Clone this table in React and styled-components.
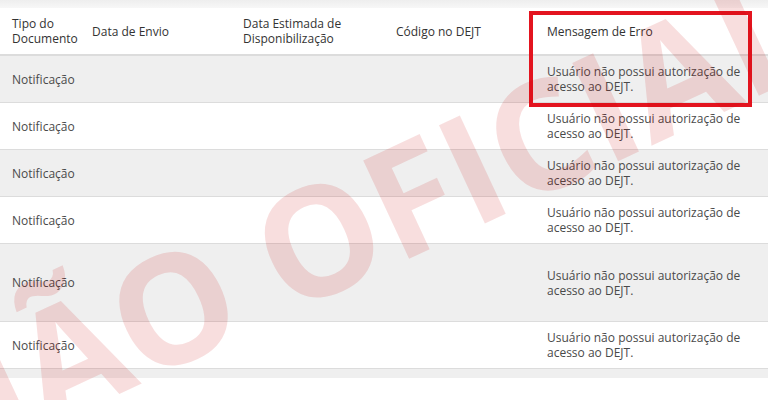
import React from "react";
import styled, { createGlobalStyle } from "styled-components";

const GlobalStyle = createGlobalStyle`
  html, body {
    margin: 0;
    padding: 0;
    background: #fff;
    font-family: "Open Sans", "Liberation Sans", sans-serif;
  }
`;

const Page = styled.div`
  position: relative;
  width: 768px;
  height: 400px;
  overflow: hidden;
  background: #fff;
`;

const TopStrip = styled.div`
  height: 8px;
  background: linear-gradient(#eeeeee, #f7f7f7);
`;

const Table = styled.table`
  width: 768px;
  border-collapse: collapse;
  table-layout: fixed;
  font-size: 12px;
  line-height: 15px;
`;

const HeadCell = styled.th`
  box-sizing: border-box;
  width: ${(p) => p.$w}px;
  padding: 8px 12px;
  text-align: left;
  font-weight: 400;
  color: #333;
  vertical-align: middle;
  border-bottom: 2px solid #dcdcdc;
`;

const Row = styled.tr`
  height: ${(p) => p.$h}px;
  background: ${(p) => (p.$striped ? "#efefef" : "#fff")};
  border-bottom: 1px solid #dcdcdc;
`;

const Cell = styled.td`
  box-sizing: border-box;
  padding: 8px 12px;
  color: #4a4a4a;
  vertical-align: middle;
`;

const BottomStrip = styled.div`
  height: 9px;
  background: #efefef;
`;

const Highlight = styled.div`
  position: absolute;
  left: 529px;
  top: 11px;
  width: 223px;
  height: 96px;
  box-sizing: border-box;
  border: 4px solid #e3141f;
  pointer-events: none;
`;

const Watermark = styled.div`
  position: fixed;
  inset: 0;
  display: flex;
  align-items: center;
  justify-content: center;
  pointer-events: none;
  overflow: hidden;
`;

const WatermarkText = styled.span`
  display: block;
  white-space: nowrap;
  font-family: "Open Sans", "Liberation Sans", sans-serif;
  font-weight: 700;
  font-size: 152px;
  color: rgba(204, 0, 0, 0.13);
  transform: translate(-29px, 19px) rotate(-25deg);
`;

const columns = [
  { label: "Tipo do Documento", w: 80 },
  { label: "Data de Envio", w: 151 },
  { label: "Data Estimada de Disponibilização", w: 153 },
  { label: "Código no DEJT", w: 151 },
  { label: "Mensagem de Erro", w: 233 },
];

const rows = [47, 47, 47, 47, 78, 47];

export default function App() {
  return (
    <Page>
      <GlobalStyle />
      <TopStrip />
      <Table>
        <thead>
          <tr>
            {columns.map((c) => (
              <HeadCell key={c.label} $w={c.w}>
                {c.label}
              </HeadCell>
            ))}
          </tr>
        </thead>
        <tbody>
          {rows.map((h, i) => (
            <Row key={i} $h={h} $striped={i % 2 === 0}>
              <Cell>Notificação</Cell>
              <Cell />
              <Cell />
              <Cell />
              <Cell>Usuário não possui autorização de acesso ao DEJT.</Cell>
            </Row>
          ))}
        </tbody>
      </Table>
      <BottomStrip />
      <Highlight />
      <Watermark>
        <WatermarkText>NÃO OFICIAL</WatermarkText>
      </Watermark>
    </Page>
  );
}
